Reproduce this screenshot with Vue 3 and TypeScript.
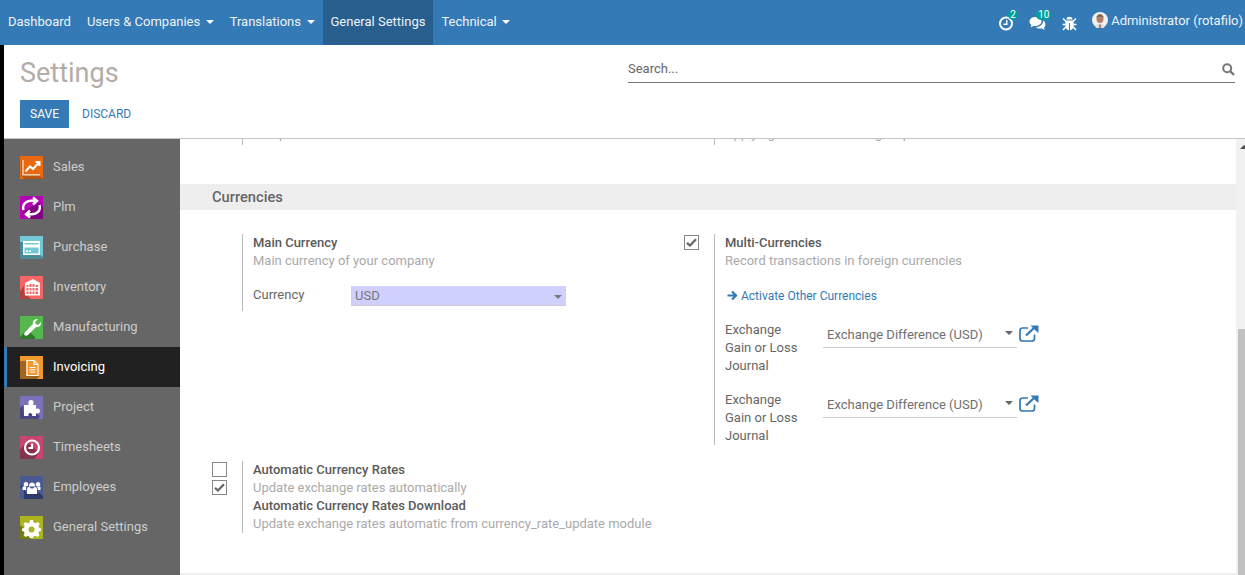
<script setup lang="ts">
interface AppItem {
  name: string
  bg: string
  dark: string
  shadow: string
  fill?: string
  line?: string
  soft?: string
  active?: boolean
  sw?: number
}

const navItems = [
  { label: 'Dashboard', caret: false, active: false },
  { label: 'Users & Companies', caret: true, active: false },
  { label: 'Translations', caret: true, active: false },
  { label: 'General Settings', caret: false, active: true },
  { label: 'Technical', caret: true, active: false },
]

const apps: AppItem[] = [
  { name: 'Sales', bg: '#e8690f', dark: '#b4560f', shadow: 'M1.500 4V20L4.500 23H23L19.500 19.500H3.500V4Z',
    soft: 'M3 4V18.800H20', line: 'M5.500 15.500L10 10.500L13 13L18.500 7M15.500 6H19.500V10', sw: 2 },
  { name: 'Plm', bg: '#b305b3', dark: '#7f0580', shadow: 'M3 16L10 23H23V11L19 7Z',
    line: 'M3.500 14C1.800 8 6.500 4.500 11.500 4.800H16.500M13 1.500L17 4.800L13 8.500M19.500 9C21.200 15 16.500 18.500 11.500 18.200H6.500M10 14.500L6 18.200L10 21.500', sw: 2.400 },
  { name: 'Purchase', bg: '#72c8d6', dark: '#4b8b98', shadow: 'M3 6H0V23H23V21.500L20 18.500H3Z',
    fill: 'M3 5H20V19H3ZM4.500 7V8.500H18.500V7ZM4.500 11.500V17.500H18.500V11.500ZM6 14.500H8V16H6ZM9 14.500H11V16H9Z' },
  { name: 'Inventory', bg: '#f56565', dark: '#ab4343', shadow: 'M0 15L4 10V17L11 23H0Z',
    fill: 'M13 3L20 7V19.500H5V7ZM6.500 9V11H8.500V9ZM9.500 8V11H11.500V8ZM12.500 8V11H14.500V8ZM15.500 9V11H18V9ZM6.500 12V14.500H8.500V12ZM9.500 12V14.500H11.500V12ZM12.500 12V14.500H14.500V12ZM15.500 12V14.500H18V12ZM6.500 15.500V18H8.500V15.500ZM9.500 15.500V18H11.500V15.500ZM12.500 15.500V18H14.500V15.500ZM15.500 15.500V18H18V15.500Z' },
  { name: 'Manufacturing', bg: '#55b84c', dark: '#2e7a2c', shadow: 'M3 18L7 13L15 21V23H0V21Z',
    fill: 'M18 3L15 6L16 8L18 9L21 6C21.500 9 19 12 16 11L8 19C7 20 5 20 4.500 19C4 18 4 17 5 16L13 8C12 5 15 2.500 18 3Z' },
  { name: 'Invoicing', bg: '#f2982c', dark: '#a0661f', shadow: 'M6 5H0V23H17L20 20H6Z', active: true,
    line: 'M7 4.500H14L18 8.500V19.500H7ZM14 4.500V8.500H18M9.500 11.500H15.500M9.500 13.800H15.500M9.500 16H15.500', sw: 1.100 },
  { name: 'Project', bg: '#7a73ba', dark: '#494683', shadow: 'M3 9L0 12V23H18L20 20L15 17H4Z',
    fill: 'M4 9H9C8 7 8 4 11 4C14 4 14 7 13 9H16V13C18 12 20 13 20 15C20 17 18 18 16 17V20H12C13 18 11 17 10 17C9 17 8 18 8.500 20H4Z' },
  { name: 'Timesheets', bg: '#c6466f', dark: '#853150', shadow: 'M7 6L0 14V23H14L19 17Z',
    line: 'M12 4.500A7 7 0 1 0 12 18.500A7 7 0 1 0 12 4.500ZM12 7.500V12H8.500', sw: 2.200 },
  { name: 'Employees', bg: '#4b5a93', dark: '#2e3a68', shadow: 'M0 11L4 14V23H23V20L19 17H6L2 9Z',
    fill: 'M12 6.500A3 3 0 1 1 11.990 6.500ZM6 6A2.300 2.300 0 1 1 5.990 6ZM18 6A2.300 2.300 0 1 1 17.990 6ZM7 13C7 11 9 10.500 12 10.500C15 10.500 17 11 17 13V18H7ZM2.500 11C3 10 5 10 6.500 10C6 11 6 12 6 14H2.500ZM16.500 10C18 10 20 10 20.500 11V14H18C18 12 17 11 16.500 10Z' },
  { name: 'General Settings', bg: '#aab41e', dark: '#767d0f', shadow: 'M0 9L4 12V17L11 23H0Z',
    fill: 'M10 4H13L13.500 6.500L15.500 7.300L17.700 6L19.800 8.100L18.500 10.300L19.300 12L21 12.500V15L19 15.500L18.300 17.300L19.500 19L17.500 21L15.300 19.800L13.500 20.500L13 22H10L9.500 20.500L7.700 19.800L5.500 21L3.500 19L4.700 17.300L4 15.500L2 15V12.500L4 12L4.700 10.300L3.400 8.100L5.500 6L7.700 7.300L9.500 6.500ZM11.500 10.500A3 3 0 1 0 11.510 16.500A3 3 0 1 0 11.500 10.500Z' },
]

const journals = ['one', 'two']
</script>

<template>
  <div class="app">
    <header class="topbar">
      <nav class="nav">
        <a v-for="n in navItems" :key="n.label" class="nav-item" :class="{ on: n.active }">
          {{ n.label }}<i v-if="n.caret" class="caret"></i>
        </a>
      </nav>
      <div class="systray">
        <span class="tray tray-clock">
          <svg width="17" height="17" viewBox="0 0 17 17" class="tray-icon">
            <circle cx="8" cy="8.500" r="6" fill="none" stroke="#fff" stroke-width="2" />
            <path d="M8.800 5V9.300H5.500" fill="none" stroke="#fff" stroke-width="1.400" />
          </svg>
          <b class="badge">2</b>
        </span>
        <span class="tray tray-chat">
          <svg width="17" height="16" viewBox="0 0 17 16" class="tray-icon">
            <path d="M6.500 1C3 1 0.500 3 0.500 5.500C0.500 7 1.300 8.200 2.500 9L1.500 11.500L4.500 10C8.500 10.500 12.500 8.500 12.500 5.500C12.500 3 10 1 6.500 1Z" fill="#fff" />
            <path d="M14 4.500C14.500 8 11 11 6.500 11.300C8 12.500 10.500 12.800 12.500 12.300L15.500 14L15 11.500C16.500 10.500 17.500 6.500 14 4.500Z" fill="#fff" />
          </svg>
          <b class="badge">10</b>
        </span>
        <span class="tray tray-bug">
          <svg width="15" height="15" viewBox="0 0 15 15">
            <path d="M4.500 3.500A3 2.800 0 0 1 10.500 3.500Z" fill="#fff" />
            <path d="M3.300 4.500H11.700V10C11.700 12 10.200 13.800 8 14.200V7H7V14.200C4.800 13.800 3.300 12 3.300 10Z" fill="#fff" />
            <path d="M1 2.500L3.800 5.300M14 2.500L11.200 5.300M0.500 8.500H3.500M14.500 8.500H11.500M1 14L3.800 11M14 14L11.200 11" stroke="#fff" stroke-width="1.500" fill="none" />
          </svg>
        </span>
        <span class="user">
          <svg width="16" height="16" viewBox="0 0 16 16" class="avatar">
            <circle cx="8" cy="8" r="8" fill="#f2efec" />
            <ellipse cx="8" cy="6.500" rx="3.500" ry="4.600" fill="#b0826a" />
            <path d="M4.500 5.500C4.500 2 11.500 2 11.500 5.500C10 4 6 4 4.500 5.500Z" fill="#6b5a50" />
            <path d="M3.500 16L5.500 11.500L8 13L10.500 11.500L12.500 16Z" fill="#e0dcd8" />
            <path d="M7.300 12.500H8.700L8.600 16H7.400Z" fill="#8a4a3a" />
          </svg>
          <span>Administrator (rotafilo)</span>
        </span>
      </div>
    </header>

    <div class="below">
      <section class="panel">
        <div class="panel-left">
          <h1 class="title">Settings</h1>
          <div class="buttons">
            <button class="save">SAVE</button>
            <button class="discard">DISCARD</button>
          </div>
        </div>
        <div class="search">
          <span>Search...</span>
          <svg width="13" height="13" viewBox="0 0 13 13">
            <circle cx="5.200" cy="5.200" r="4" fill="none" stroke="#777" stroke-width="2" />
            <path d="M8 8L12 12" stroke="#777" stroke-width="2.400" />
          </svg>
        </div>
      </section>

      <div class="workspace">
        <aside class="sidebar">
          <a v-for="a in apps" :key="a.name" class="app-link" :class="{ on: a.active }">
            <svg width="23" height="23" viewBox="0 0 23 23" class="app-icon">
              <rect width="23" height="23" :fill="a.bg" />
              <path :d="a.shadow" :fill="a.dark" />
              <path v-if="a.soft" :d="a.soft" fill="none" stroke="#f8d3b8" stroke-width="1.500" />
              <path v-if="a.fill" :d="a.fill" fill="#fff" fill-rule="evenodd" />
              <path v-if="a.line" :d="a.line" fill="none" stroke="#fff" :stroke-width="a.sw" />
            </svg>
            <span>{{ a.name }}</span>
          </a>
        </aside>

        <main class="content">
          <div class="sheet">
            <div class="clip-row">
              <div class="setting"><div class="box-l"></div><div class="box-r clip-text"><span>Setup the default</span></div></div>
              <div class="setting"><div class="box-l"></div><div class="box-r clip-text"><span>Applying taxes on the margin up</span></div></div>
            </div>

            <h2 class="band">Currencies</h2>

            <div class="row">
              <div class="setting">
                <div class="box-l"></div>
                <div class="box-r">
                  <div class="name">Main Currency</div>
                  <div class="desc">Main currency of your company</div>
                  <div class="field currency">
                    <label class="lab">Currency</label>
                    <div class="required">
                      <span>USD</span><i class="arrow"></i>
                    </div>
                  </div>
                </div>
              </div>

              <div class="setting">
                <div class="box-l">
                  <span class="check on">
                    <svg width="13" height="13" viewBox="0 0 13 13"><path d="M2 6.800L5 9.500L11 3.200" fill="none" stroke="#666" stroke-width="2.300" /></svg>
                  </span>
                </div>
                <div class="box-r">
                  <div class="name">Multi-Currencies</div>
                  <div class="desc">Record transactions in foreign currencies</div>
                  <a class="link">
                    <svg width="11" height="11" viewBox="0 0 11 11"><path d="M0.500 5.500H8.500M5 1.500L9 5.500L5 9.500" fill="none" stroke="#337ab7" stroke-width="2.200" /></svg>
                    Activate Other Currencies
                  </a>
                  <div v-for="j in journals" :key="j" class="field journal">
                    <label class="lab">Exchange Gain or Loss Journal</label>
                    <div class="m2o">
                      <span>Exchange Difference (USD)</span><i class="arrow dark"></i>
                    </div>
                    <svg class="ext" width="20" height="17" viewBox="0 0 20 17">
                      <path d="M9 3H3.500C2 3 1 4 1 5.500V13.500C1 15 2 16 3.500 16H13C14.500 16 15.500 15 15.500 13.500V9.500" fill="none" stroke="#337ab7" stroke-width="1.700" />
                      <path d="M7 10.500L15.500 2.500" stroke="#337ab7" stroke-width="2.300" />
                      <path d="M11.500 0.500H19.500V8L17 6L13.500 2.500Z" fill="#337ab7" />
                    </svg>
                  </div>
                </div>
              </div>
            </div>

            <div class="row last">
              <div class="setting">
                <div class="box-l stack">
                  <span class="check"></span>
                  <span class="check on">
                    <svg width="13" height="13" viewBox="0 0 13 13"><path d="M2 6.800L5 9.500L11 3.200" fill="none" stroke="#666" stroke-width="2.300" /></svg>
                  </span>
                </div>
                <div class="box-r wide">
                  <div class="name">Automatic Currency Rates</div>
                  <div class="desc">Update exchange rates automatically</div>
                  <div class="name">Automatic Currency Rates Download</div>
                  <div class="desc">Update exchange rates automatic from currency_rate_update module</div>
                </div>
              </div>
            </div>
            <div class="sheet-end"></div>
          </div>
          <div class="scrollbar">
            <i class="up"></i>
            <div class="thumb"></div>
          </div>
        </main>
      </div>
    </div>
  </div>
</template>

<style scoped>
.app {
  height: 575px;
  display: flex;
  flex-direction: column;
  overflow: hidden;
  font-family: Roboto, sans-serif;
  font-size: 13px;
  line-height: 18px;
  color: #666;
  background: #000;
}
.topbar {
  height: 45px;
  flex: none;
  background: #337ab7;
  display: flex;
  justify-content: space-between;
  color: #eef3f8;
}
.nav { display: flex; }
.nav-item {
  padding: 13px 8px 0;
  height: 45px;
  box-sizing: border-box;
}
.nav-item.on { background: #285f8f; }
.caret {
  display: inline-block;
  margin-left: 5.5px;
  vertical-align: 2px;
  border-top: 4px solid #fff;
  border-left: 4px solid transparent;
  border-right: 4px solid transparent;
}
.systray { display: flex; align-items: flex-start; padding-right: 2px; }
.tray { display: block; position: relative; height: 45px; box-sizing: border-box; }
.tray-icon { display: block; }
.tray-clock { width: 31px; padding-top: 15px; }
.tray-chat { width: 33px; padding-top: 16px; }
.tray-bug { width: 30px; padding-top: 16px; }
.badge {
  position: absolute;
  top: 10px;
  left: 10px;
  min-width: 6px;
  height: 10px;
  padding: 0 2px;
  border-radius: 5px;
  background: #00a09d;
  color: #fff;
  font-size: 10px;
  font-weight: 400;
  line-height: 10px;
  text-align: center;
}
.tray-chat .badge { left: 7px; padding: 0 2px; }
.user { display: flex; gap: 3px; padding-top: 12px; }
.avatar { margin-top: 0; }

.below {
  flex: 1;
  min-height: 0;
  margin-left: 4px;
  display: flex;
  flex-direction: column;
  background: #fff;
}
.panel {
  height: 94px;
  flex: none;
  box-sizing: border-box;
  border-bottom: 1px solid #c4c4c4;
  display: flex;
  justify-content: space-between;
  padding: 0 10px 0 16px;
  background: #fff;
}
.title {
  margin: 11px 0 0;
  font-size: 27px;
  line-height: 34px;
  font-weight: 400;
  color: #b4aca6;
}
.buttons { display: flex; margin-top: 10px; }
.save {
  width: 49px;
  height: 28px;
  padding: 0;
  border: 0;
  background: #337ab7;
  color: #fff;
  font: 12px Roboto, sans-serif;
}
.discard {
  height: 28px;
  margin-left: 13px;
  padding: 0;
  border: 0;
  background: none;
  color: #337ab7;
  font: 12px Roboto, sans-serif;
}
.search {
  width: 607px;
  height: 38px;
  box-sizing: border-box;
  border-bottom: 1px solid #777;
  display: flex;
  justify-content: space-between;
  align-items: center;
  padding-top: 10px;
  font-size: 13px;
  color: #666;
}
.search svg { margin-top: 1px; }

.workspace { flex: 1; min-height: 0; display: flex; }
.sidebar {
  width: 176px;
  flex: none;
  background: #666;
  padding-top: 8px;
  box-sizing: border-box;
}
.app-link {
  height: 40px;
  display: flex;
  align-items: center;
  padding-left: 16px;
  gap: 10px;
  color: #ccc;
  box-sizing: border-box;
}
.app-link.on {
  background: #212121;
  color: #fff;
  border-left: 3px solid #337ab7;
  padding-left: 13px;
}
.app-icon { display: block; }

.content { flex: 1; min-width: 0; display: flex; background: #fff; }
.sheet { flex: 1; min-width: 0; display: flex; flex-direction: column; }
.clip-row, .row {
  display: grid;
  grid-template-columns: 472px 472px;
  padding-left: 32px;
  align-items: start;
}
.clip-row { height: 6px; overflow: hidden; }
.setting { display: flex; }
.box-l {
  width: 30px;
  flex: none;
  box-sizing: border-box;
}
.box-r {
  width: 430px;
  border-left: 1px solid #bbb;
  padding-left: 10px;
  box-sizing: border-box;
}
.box-r.wide { width: 440px; white-space: nowrap; }
.clip-text { height: 6px; overflow: hidden; color: #aaa; }
.clip-text span { display: block; margin-top: -14px; }
.band {
  margin: 39px 0 0;
  height: 26px;
  padding-left: 32px;
  background: #eee;
  color: #666;
  font-size: 14.7px;
  font-weight: 500;
  line-height: 26px;
}
.row { margin-top: 24px; }
.row.last { margin-top: 16px; }
.name { font-weight: 500; color: #5a5a5a; }
.desc { color: #aaa; }
.field { display: flex; }
.lab { width: 98px; flex: none; padding-right: 16px; box-sizing: border-box; }
.currency { margin-top: 16px; padding-bottom: 5px; }
.required {
  width: 215px;
  height: 20px;
  background: #d0d0ff;
  border-bottom: 1px solid #ccc;
  box-sizing: border-box;
  display: flex;
  justify-content: space-between;
  align-items: center;
  padding: 0 4px;
  color: #777;
}
.arrow {
  margin-top: 3px;
  border-top: 4px solid #777;
  border-left: 4px solid transparent;
  border-right: 4px solid transparent;
}
.arrow.dark { margin-top: -2px; border-top-color: #666; }
.link {
  display: block;
  margin: 17px 0 16px 2px;
  font-size: 12px;
  color: #337ab7;
}
.link svg { vertical-align: -1px; }
.journal { margin-bottom: 16px; }
.journal:last-child { margin-bottom: 0; }
.m2o {
  width: 194px;
  height: 28px;
  margin-top: -1px;
  box-sizing: border-box;
  border-bottom: 1px solid #ccc;
  display: flex;
  justify-content: space-between;
  align-items: center;
  padding: 0 4px;
  color: #707070;
}
.m2o span { padding-top: 2px; }
.ext { margin: 4px 0 0 2px; }
.check {
  display: flex;
  align-items: center;
  justify-content: center;
  width: 15px;
  height: 15px;
  box-sizing: border-box;
  border: 1px solid #888;
  background: #fff;
  margin-top: 1px;
}
.stack .check + .check { margin-top: 3px; }
.scrollbar {
  width: 9px;
  flex: none;
  background: #f1f1f1;
  display: flex;
  flex-direction: column;
  padding-left: 2px;
  box-sizing: border-box;
  overflow: hidden;
}
.up {
  margin: 6px 0 0 2px;
  width: 0;
  border-bottom: 4px solid #505050;
  border-left: 4px solid transparent;
  border-right: 4px solid transparent;
}
.thumb { margin-top: 180px; flex: 1; background: #c1c1c1; }
.sheet-end { margin-top: auto; height: 2px; background: #eee; }
</style>

<style>
html, body { margin: 0; overflow: hidden; background: #fff; }
</style>
